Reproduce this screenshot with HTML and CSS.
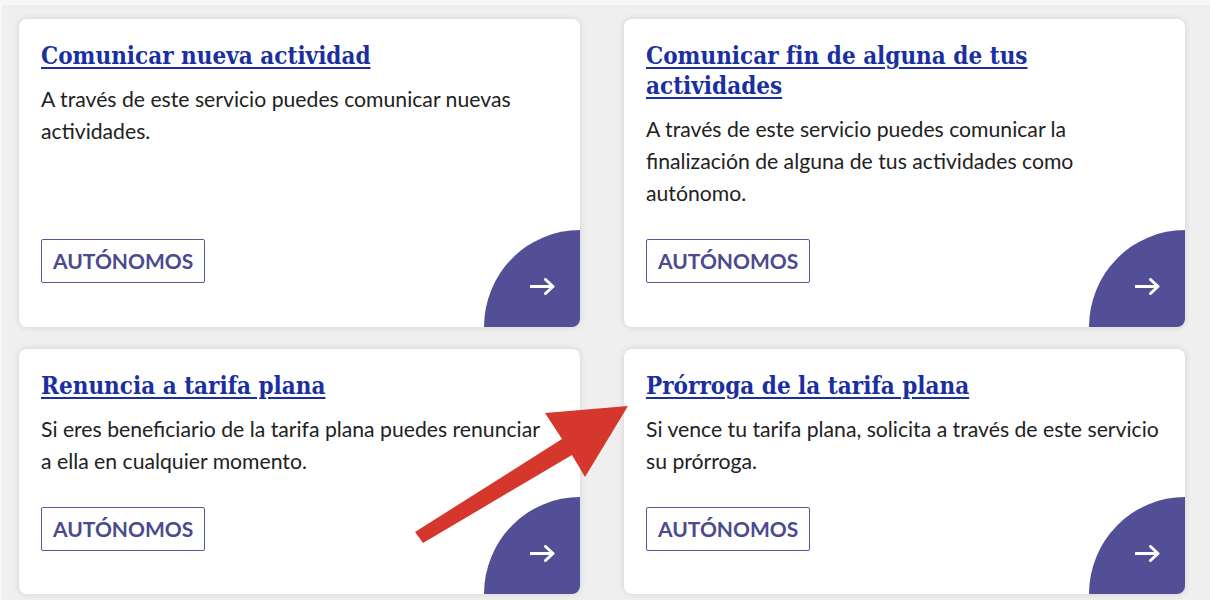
FILE: index.html
```html
<!DOCTYPE html>
<html lang="es">
<head>
<meta charset="utf-8">
<title>Servicios autónomos</title>
<link rel="stylesheet" href="styles.css">
</head>
<body>
<div class="page">
  <div class="grid">
    <article class="card">
      <h2 class="card-title"><a href="#">Comunicar nueva actividad</a></h2>
      <p class="card-text">A través de este servicio puedes comunicar nuevas actividades.</p>
      <span class="badge">AUTÓNOMOS</span>
      <span class="corner"><svg class="go" viewBox="0 0 25 17" width="25" height="17"><path d="M1 8.5H23M15.5 1.5L23 8.5L15.5 15.5" fill="none" stroke="#fff" stroke-width="3" stroke-linecap="round" stroke-linejoin="round"/></svg></span>
    </article>
    <article class="card">
      <h2 class="card-title"><a href="#">Comunicar fin de alguna de tus actividades</a></h2>
      <p class="card-text">A través de este servicio puedes comunicar la finalización de alguna de tus actividades como autónomo.</p>
      <span class="badge">AUTÓNOMOS</span>
      <span class="corner"><svg class="go" viewBox="0 0 25 17" width="25" height="17"><path d="M1 8.5H23M15.5 1.5L23 8.5L15.5 15.5" fill="none" stroke="#fff" stroke-width="3" stroke-linecap="round" stroke-linejoin="round"/></svg></span>
    </article>
    <article class="card">
      <h2 class="card-title"><a href="#">Renuncia a tarifa plana</a></h2>
      <p class="card-text">Si eres beneficiario de la tarifa plana puedes renunciar a ella en cualquier momento.</p>
      <span class="badge">AUTÓNOMOS</span>
      <span class="corner"><svg class="go" viewBox="0 0 25 17" width="25" height="17"><path d="M1 8.5H23M15.5 1.5L23 8.5L15.5 15.5" fill="none" stroke="#fff" stroke-width="3" stroke-linecap="round" stroke-linejoin="round"/></svg></span>
    </article>
    <article class="card">
      <h2 class="card-title"><a href="#">Prórroga de la tarifa plana</a></h2>
      <p class="card-text">Si vence tu tarifa plana, solicita a través de este servicio su prórroga.</p>
      <span class="badge">AUTÓNOMOS</span>
      <span class="corner"><svg class="go" viewBox="0 0 25 17" width="25" height="17"><path d="M1 8.5H23M15.5 1.5L23 8.5L15.5 15.5" fill="none" stroke="#fff" stroke-width="3" stroke-linecap="round" stroke-linejoin="round"/></svg></span>
    </article>
  </div>
  <svg class="pointer" viewBox="0 0 1210 600" width="1210" height="600">
    <polygon points="628,406 545,413 562,439 415,532 423,543 572,455 585,477" fill="#d5372d"/>
  </svg>
</div>
</body>
</html>
```

FILE: styles.css
```css
html, body {
  margin: 0;
  padding: 0;
}

body {
  background: #f7f7f7;
  font-family: Lato, "Noto Sans", sans-serif;
  overflow: hidden;
}

.page {
  position: relative;
  margin: 5px 0 0 2px;
  padding: 14px 25px 0 17px;
  min-height: 595px;
  box-sizing: border-box;
  background: #efefef;
}

.grid {
  display: grid;
  grid-template-columns: 561px 561px;
  column-gap: 44px;
  row-gap: 22px;
}

.card {
  position: relative;
  display: flex;
  flex-direction: column;
  align-items: flex-start;
  padding: 22px 24.7px 43.5px 22px;
  background: #ffffff;
  border-radius: 8px;
  box-shadow: 0 0 7px rgba(0, 0, 0, 0.12);
  overflow: hidden;
}

.card-title {
  margin: 0;
  font-family: "DejaVu Serif Condensed", "DejaVu Serif", serif;
  font-stretch: condensed;
  font-weight: 700;
  font-size: 24px;
  line-height: 30px;
}

.card-title a {
  color: #1b30a0;
  text-decoration: underline;
  text-decoration-thickness: 1.5px;
  text-underline-offset: 3px;
}

.card-text {
  margin: 12px 0 30px;
  font-size: 21.2px;
  line-height: 32px;
  color: #222222;
}

.badge {
  margin-top: auto;
  box-sizing: border-box;
  height: 44px;
  padding: 0 11px;
  border: 1px solid #5856a0;
  border-radius: 2px;
  font-weight: 700;
  font-size: 21px;
  line-height: 42px;
  color: #4b4a8e;
}

.corner {
  position: absolute;
  right: 0;
  bottom: 0;
  width: 96px;
  height: 97px;
  box-sizing: border-box;
  display: flex;
  justify-content: flex-end;
  align-items: flex-end;
  padding: 0 25px 32px 0;
  background: #524f96;
  border-top-left-radius: 100%;
}

.go {
  display: block;
}

.pointer {
  position: absolute;
  left: -2px;
  top: -5px;
  pointer-events: none;
}
```
